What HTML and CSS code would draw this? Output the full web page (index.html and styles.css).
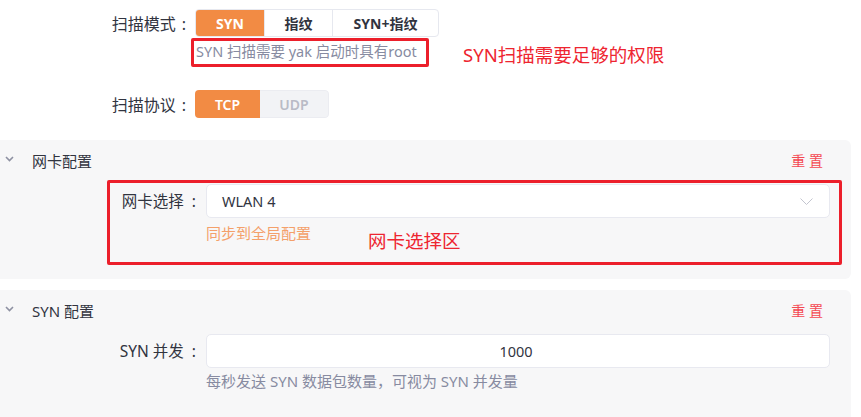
FILE: index.html
```html
<!DOCTYPE html>
<html lang="zh">
<head>
<meta charset="utf-8">
<link rel="stylesheet" href="styles.css">
</head>
<body>
<div class="top">
  <div class="row">
    <div class="label">扫描模式<span class="colon">:</span></div>
    <div class="radio-group">
      <span class="rb active">SYN</span>
      <span class="rb w68">指纹</span>
      <span class="rb w107">SYN+指纹</span>
    </div>
  </div>
  <div class="hint-row">
    <div class="hint">SYN 扫描需要 yak 启动时具有root</div>
    <div class="note note-top">SYN扫描需要足够的权限</div>
  </div>
  <div class="row proto">
    <div class="label">扫描协议<span class="colon">:</span></div>
    <div class="radio-group plain">
      <span class="rb tcp active">TCP</span>
      <span class="rb udp">UDP</span>
    </div>
  </div>
</div>

<section class="panel">
  <div class="panel-head">
    <svg class="chev" width="9" height="6" viewBox="0 0 9 6"><path d="M1 1l3.5 3.5L8 1" fill="none" stroke="#8e91a2" stroke-width="1.6"/></svg>
    <span class="title">网卡配置</span>
    <span class="reset">重 置</span>
  </div>
  <div class="item-wrap">
    <div class="item">
      <div class="flabel">网卡选择<span class="colon">:</span></div>
      <div class="control">
        <div class="select">
          <span>WLAN 4</span>
          <svg class="sel-arrow" width="13" height="7" viewBox="0 0 13 7"><path d="M0.5 0.5l6 6 6-6" fill="none" stroke="#c3c5cf" stroke-width="1"/></svg>
        </div>
        <div class="sync">同步到全局配置</div>
      </div>
    </div>
    <div class="mark-box"></div>
    <div class="note note-nic">网卡选择区</div>
  </div>
</section>

<section class="panel panel2">
  <div class="panel-head">
    <svg class="chev" width="9" height="6" viewBox="0 0 9 6"><path d="M1 1l3.5 3.5L8 1" fill="none" stroke="#8e91a2" stroke-width="1.6"/></svg>
    <span class="title">SYN 配置</span>
    <span class="reset">重 置</span>
  </div>
  <div class="item">
    <div class="flabel">SYN 并发<span class="colon">:</span></div>
    <div class="control">
      <div class="input">1000</div>
      <div class="help">每秒发送 SYN 数据包数量，可视为 SYN 并发量</div>
    </div>
  </div>
</section>
</body>
</html>
```

FILE: styles.css
```css
*, *::before, *::after { box-sizing: border-box; }
html, body { margin: 0; padding: 0; background: #fff; }
body {
  font-family: "Noto Sans", "Noto Sans CJK SC", sans-serif;
  font-size: 14px;
  color: #31343f;
  width: 861px;
  height: 417px;
  overflow: hidden;
}
.top { padding-top: 9px; }
.row { display: flex; align-items: center; height: 28px; }
.label { width: 195px; text-align: right; padding-right: 9px; font-size: 16px; white-space: nowrap; }
.colon { margin-left: 6px; }
.radio-group { display: flex; height: 28px; border: 1px solid #e6e8ef; border-radius: 4px; overflow: hidden; }
.rb {
  display: flex; align-items: center; justify-content: center;
  width: 68px; font-weight: 700; font-size: 14px; color: #31343f;
  border-left: 1px solid #e6e8ef;
}
.rb:first-child { border-left: none; }
.rb.w107 { width: 106px; }
.rb.active { background: #f28b44; color: #fff; }
.radio-group.plain { border: none; }
.rb.tcp { width: 65px; font-weight: 600; border: none; }
.rb.udp { width: 69px; background: #f2f3f6; color: #b9bbc6; font-weight: 600; border: 1px solid #ebecf1; border-left: none; border-radius: 0 4px 4px 0; }
.hint-row { position: relative; height: 53px; padding-left: 196px; padding-top: 3px; }
.hint { font-size: 14.5px; color: #878ba1; white-space: nowrap; }
.hint::after {
  content: ""; position: absolute; left: 191px; top: 1px; width: 238px; height: 29px;
  border: 3px solid #ec1f2b; border-radius: 2px;
}
.note { position: absolute; color: #ee2530; font-size: 18.5px; white-space: nowrap; }
.note-top { left: 463px; top: 4px; }
.panel {
  margin-top: 22px; margin-right: 10px; background: #f7f7f8;
  border-radius: 0 6px 6px 0; padding-bottom: 14px;
}
.panel2 { margin-top: 11px; padding-bottom: 28px; border-radius: 0 6px 0 0; }
.panel-head { display: flex; align-items: center; height: 40px; padding: 0 28px 0 5px; }
.chev { margin-right: 18px; margin-top: -2px; }
.title { font-size: 15px; color: #31343f; }
.reset { margin-left: auto; color: #f44a52; font-size: 14px; }
.item-wrap { position: relative; height: 85px; }
.item { display: flex; padding-top: 4px; }
.flabel { width: 206px; text-align: right; padding-right: 10px; font-size: 15.5px; line-height: 34px; white-space: nowrap; }
.flabel .colon { margin-left: 8px; }
.control { width: 624px; }
.select, .input {
  height: 34px; background: #fff; border: 1px solid #e8e9f0; border-radius: 5px;
  display: flex; align-items: center;
}
.select { padding: 0 16px 0 15px; justify-content: space-between; font-size: 14.5px; }
.input { justify-content: center; padding-right: 4px; font-size: 14.5px; }
.sync { color: #f4a06a; font-size: 15px; margin-top: 4px; }
.help { color: #878ba1; font-size: 15px; margin-top: 2px; }
.mark-box {
  position: absolute; left: 107px; top: 0; width: 735px; height: 85px;
  border: 3px solid #ec1f2b; border-radius: 2px;
}
.note-nic { left: 368px; top: 47px; }
```
